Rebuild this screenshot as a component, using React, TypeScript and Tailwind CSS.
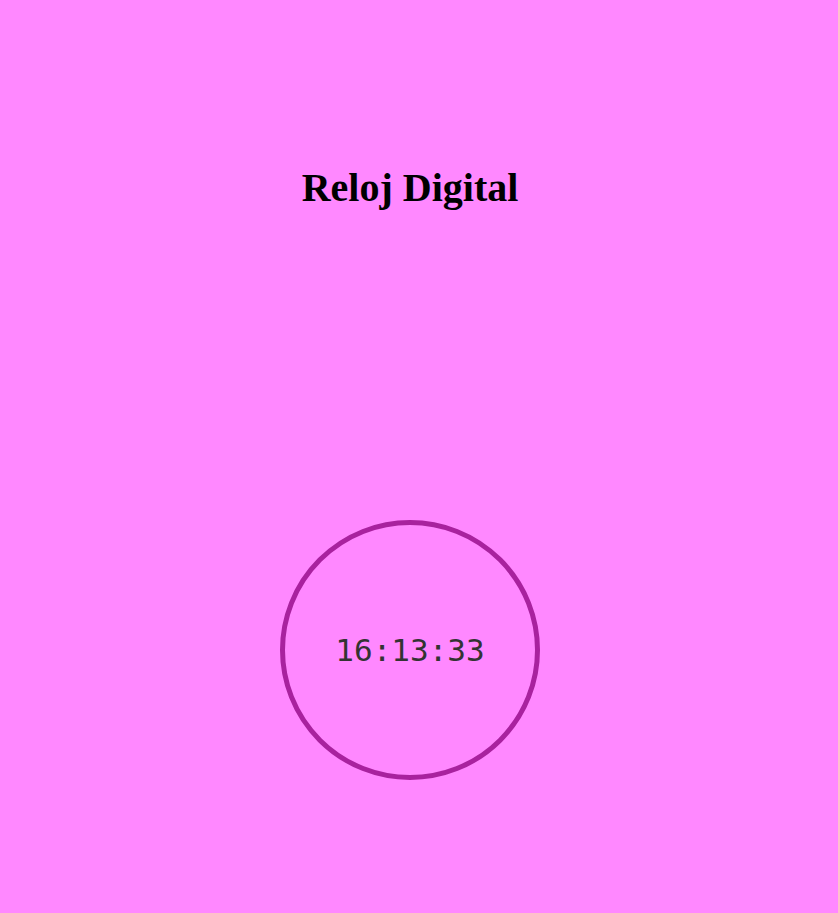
export default function App() {
  return (
    <div className="min-h-[913px] w-full bg-[#ff88ff]">
      <div className="w-[820px] flex flex-col items-center pt-[164px]">
        <h1 className="text-[40px] leading-[48px] font-bold text-black [font-family:'Liberation_Serif',serif]">
          Reloj Digital
        </h1>
        <div className="mt-[308px] w-[260px] h-[260px] rounded-full border-[5px] border-[#a8229e] flex items-center justify-center">
          <span className="text-[31px] text-[#333333] [font-family:'DejaVu_Sans_Mono',monospace]">
            16:13:33
          </span>
        </div>
      </div>
    </div>
  )
}
